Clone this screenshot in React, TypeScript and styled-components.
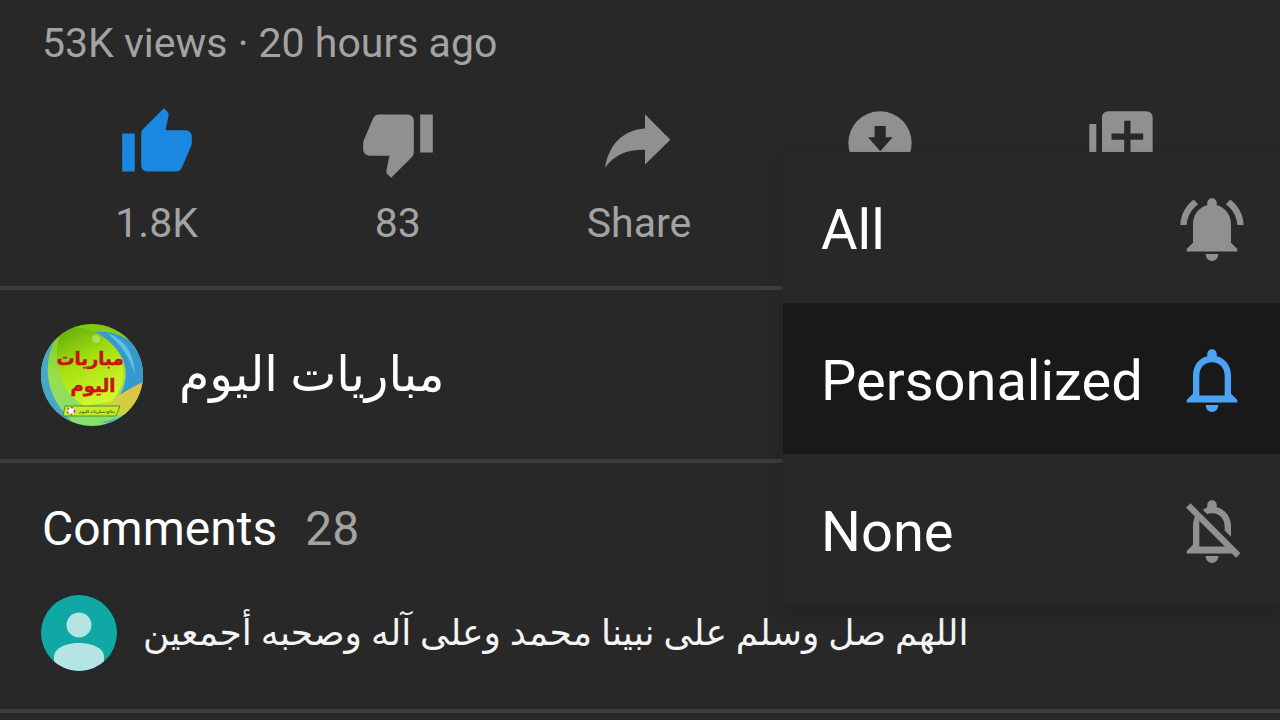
import React from "react";
import styled, { createGlobalStyle } from "styled-components";

const GlobalStyle = createGlobalStyle`
  *, *::before, *::after { box-sizing: border-box; }
  body {
    margin: 0;
    background: #282828;
    color: #fff;
    font-family: Roboto, "Noto Sans", "DejaVu Sans", sans-serif;
  }
  h2, p { margin: 0; padding: 0; font-weight: 400; }
  button { font: inherit; color: inherit; background: none; border: 0; padding: 0; cursor: pointer; }
`;

const Page = styled.main`
  position: relative;
  overflow: hidden;
`;

const Section = styled.section`
  border-bottom: 4px solid #3d3d3d;
`;

const Meta = styled.p`
  padding: 16px 42px 0;
  font-size: 41px;
  line-height: 54px;
  color: #a3a3a3;
`;

const Actions = styled.div`
  display: flex;
  padding: 35px 38px 39px 36px;
`;

const Action = styled.button<{ $active?: boolean }>`
  flex: 1;
  display: flex;
  flex-direction: column;
  align-items: center;
  gap: 18px;
  color: ${(p) => (p.$active ? "#1a87e0" : "#909090")};
`;

const ActionLabel = styled.span`
  font-size: 41px;
  line-height: 48px;
  color: #a3a3a3;
`;

const Icon = styled.svg`
  display: block;
  flex: none;
  width: 76px;
  height: 76px;
  fill: currentColor;
`;

const Channel = styled.a`
  display: flex;
  align-items: center;
  gap: 36px;
  padding: 34px 41px 33px;
  color: inherit;
  text-decoration: none;
`;

const ChannelAvatar = styled.svg`
  display: block;
  flex: none;
  width: 102px;
  height: 102px;
`;

const ChannelName = styled.span`
  font-size: 49px;
  line-height: 60px;
`;

const CommentsHeader = styled.header`
  display: flex;
  gap: 28px;
  padding: 36px 42px 0;
  font-size: 48px;
  line-height: 60px;
`;

const CommentsTitle = styled.h2`
  font-size: 48px;
`;

const Count = styled.span`
  color: #a3a3a3;
`;

const Comment = styled.div`
  display: flex;
  align-items: center;
  gap: 26px;
  padding: 36px 41px 38px;
`;

const UserAvatar = styled.svg`
  display: block;
  flex: none;
  width: 76px;
  height: 76px;
`;

const CommentText = styled.p`
  font-size: 36px;
  line-height: 60px;
  color: #f4f4f4;
`;

const Menu = styled.div`
  position: absolute;
  top: 152px;
  right: 0;
  width: 497px;
  background: #282828;
  box-shadow: 0 8px 16px rgba(0, 0, 0, 0.16);
`;

const MenuItem = styled.button<{ $selected?: boolean }>`
  display: flex;
  align-items: center;
  justify-content: space-between;
  width: 100%;
  padding: 39px 30px 34px 38px;
  font-size: 56px;
  line-height: 78px;
  text-align: left;
  background: ${(p) => (p.$selected ? "#191919" : "transparent")};
`;

const MenuIcon = styled(Icon)<{ $selected?: boolean }>`
  color: ${(p) => (p.$selected ? "#4ba3f8" : "#909090")};
`;

const BELL =
  "M12 2c-.83 0-1.5.67-1.5 1.5v.7C7.6 4.9 6 7.4 6 10.3V16l-2 2v.8h16V18l-2-2v-5.7c0-2.9-1.6-5.4-4.5-6.1v-.7C13.5 2.67 12.83 2 12 2z";
const CLAPPER = "M10 19.6h4c0 1.3-.9 2.2-2 2.2s-2-.9-2-2.2z";

const menuItems = [
  {
    label: "All",
    paths: [
      BELL,
      CLAPPER,
      "M7.6 3.9L6.2 2.4C3.8 4.3 2.1 7.1 2 10.4h2c.2-2.7 1.6-5 3.6-6.5z",
      "M16.4 3.9l1.4-1.5c2.4 1.9 4.1 4.7 4.2 8h-2c-.2-2.7-1.6-5-3.6-6.5z",
    ],
  },
  {
    label: "Personalized",
    selected: true,
    paths: [BELL + "M8 16.6V10.4C8 7.8 9.6 6.1 12 6.1s4 1.7 4 4.3v6.2z", CLAPPER],
  },
  {
    label: "None",
    paths: [
      "M5.2 2.9L21 18.7l-1.4 1.4L3.8 4.3z",
      "M6.7 6.9L8 8.4v8.2h8.4l2.2 2.2H4V18l2-2v-5.7c0-1.3.2-2.5.7-3.4z",
      "M10.5 4.2v-.7C10.5 2.67 11.17 2 12 2s1.5.67 1.5 1.5v.7c2.9.7 4.5 3.2 4.5 6.1v3.2l-2-2v-1.1C16 7.8 14.4 6.1 12 6.1c-.6 0-1 .1-1.5.3L9.1 5z",
      CLAPPER,
    ],
  },
];

export default function App() {
  return (
    <>
      <GlobalStyle />
      <Page>
        <Section>
          <Meta>53K views · 20 hours ago</Meta>
          <Actions>
            <Action $active aria-pressed="true">
              <Icon viewBox="0 0 24 24" aria-hidden="true">
                <path d="M1 21h4V9H1v12zm22-11c0-1.1-.9-2-2-2h-6.31l.95-4.57.03-.32c0-.41-.17-.79-.44-1.06L14.17 1 7.59 7.59C7.22 7.95 7 8.45 7 9v10c0 1.1.9 2 2 2h9c.83 0 1.54-.5 1.84-1.22l3.02-7.05c.09-.23.14-.47.14-.73v-2z" />
              </Icon>
              <ActionLabel>1.8K</ActionLabel>
            </Action>
            <Action>
              <Icon viewBox="0 0 24 24" aria-hidden="true">
                <path d="M15 3H6c-.83 0-1.54.5-1.84 1.22l-3.02 7.05c-.09.23-.14.47-.14.73v2c0 1.1.9 2 2 2h6.31l-.95 4.57-.03.32c0 .41.17.79.44 1.06L9.83 23l6.59-6.59c.36-.36.58-.86.58-1.41V5c0-1.1-.9-2-2-2zm4 0v12h4V3h-4z" />
              </Icon>
              <ActionLabel>83</ActionLabel>
            </Action>
            <Action>
              <Icon viewBox="0 0 24 24" aria-hidden="true">
                <path d="M13.9 2.9L21.9 11l-8 7.8v-4.7C8.2 14 4.3 15.7 1.3 19.7 2.3 13.4 6.2 7.9 13.9 7.4z" />
              </Icon>
              <ActionLabel>Share</ActionLabel>
            </Action>
            <Action aria-label="Download">
              <Icon viewBox="0 0 24 24" aria-hidden="true">
                <path
                  fillRule="evenodd"
                  d="M12 2a10 10 0 1 0 0 20 10 10 0 0 0 0-20zM10.3 6.6h3.5v3.6H16l-3.9 4.4-3.9-4.4h2.1z"
                />
              </Icon>
            </Action>
            <Action aria-label="Save">
              <Icon viewBox="0 0 24 24" aria-hidden="true">
                <path
                  fillRule="evenodd"
                  d="M2 6h2.2v14H18v2H4c-1.1 0-2-.9-2-2zM8 2h12c1.1 0 2 .9 2 2v12c0 1.1-.9 2-2 2H8c-1.1 0-2-.9-2-2V4c0-1.1.9-2 2-2zM13 5v4H9v2h4v4h2v-4h4V9h-4V5z"
                />
              </Icon>
            </Action>
          </Actions>
        </Section>

        <Section>
          <Channel href="#channel">
            <ChannelAvatar viewBox="0 0 102 102" aria-hidden="true">
              <defs>
                <clipPath id="disc">
                  <circle cx="51" cy="51" r="51" />
                </clipPath>
                <linearGradient id="ring" x1="0" y1="0" x2="0" y2="1">
                  <stop offset="0" stopColor="#7fc90e" />
                  <stop offset="0.5" stopColor="#9ade4c" />
                  <stop offset="1" stopColor="#84e070" />
                </linearGradient>
                <linearGradient id="core" x1="0" y1="0" x2="0.4" y2="1">
                  <stop offset="0" stopColor="#5fa60c" />
                  <stop offset="0.5" stopColor="#a4e010" />
                  <stop offset="1" stopColor="#d2f52a" />
                </linearGradient>
                <linearGradient id="gold" x1="1" y1="0" x2="0" y2="1">
                  <stop offset="0" stopColor="#e6bc48" />
                  <stop offset="1" stopColor="#c4dc3a" />
                </linearGradient>
              </defs>
              <g clipPath="url(#disc)">
                <rect width="102" height="102" fill="url(#ring)" />
                <path d="M14 16C2 40 4 68 26 92l8 10H0V20z" fill="#45a8c8" />
                <path d="M52 8c20-2 36 4 50 22v36L76 76C94 50 84 22 52 8z" fill="#3598d0" />
                <path d="M66 9c18 6 27 20 28 42-5-18-14-30-28-42z" fill="#62c0dc" />
                <path d="M102 58C88 64 76 74 58 82l14 8 18 2 12-16z" fill="url(#gold)" />
                <path d="M99 76C90 88 80 95 60 98l20 4 22-12z" fill="#4fb3c4" />
                <path d="M20 8C10 32 18 68 44 82l26-4C92 56 84 22 54 8 42 2 28 2 20 8z" fill="url(#core)" />
                <circle cx="55" cy="15" r="4" fill="#c8f4a0" opacity="0.5" />
                <path d="M24 82h55l-4 10H22z" fill="#c6ea2c" stroke="#5a8a1c" strokeWidth="1" />
                <circle cx="30" cy="87" r="3.5" fill="#fff" stroke="#9a4a5a" strokeWidth="1.5" strokeDasharray="2 2" />
              </g>
              <text x="49" y="41" fontSize="18" fontWeight="700" fill="#c41414" stroke="#c41414" strokeWidth="0.5" textAnchor="middle">مباريات</text>
              <text x="52" y="68" fontSize="18" fontWeight="700" fill="#c41414" stroke="#c41414" strokeWidth="0.5" textAnchor="middle">اليوم</text>
              <text x="56" y="89" fontSize="4" fontWeight="700" fill="#3f6412" textAnchor="middle">نتائج مباريات اليوم</text>
            </ChannelAvatar>
            <ChannelName dir="rtl" lang="ar">مباريات اليوم</ChannelName>
          </Channel>
        </Section>

        <Section>
          <CommentsHeader>
            <CommentsTitle>Comments</CommentsTitle>
            <Count>28</Count>
          </CommentsHeader>
          <Comment>
            <UserAvatar viewBox="0 0 76 76" aria-hidden="true">
              <defs>
                <clipPath id="user">
                  <circle cx="38" cy="38" r="38" />
                </clipPath>
              </defs>
              <g clipPath="url(#user)">
                <rect width="76" height="76" fill="#10a8a4" />
                <circle cx="38" cy="30" r="12.5" fill="#b5e5e3" />
                <path d="M13 62c0-9 12-14 25-14s25 5 25 14v14H13z" fill="#b5e5e3" />
              </g>
            </UserAvatar>
            <CommentText dir="rtl" lang="ar">اللهم صل وسلم على نبينا محمد وعلى آله وصحبه أجمعين</CommentText>
          </Comment>
        </Section>

        <Menu role="menu">
          {menuItems.map((item) => (
            <MenuItem key={item.label} role="menuitemradio" aria-checked={!!item.selected} $selected={item.selected}>
              {item.label}
              <MenuIcon viewBox="0 0 24 24" aria-hidden="true" $selected={item.selected}>
                {item.paths.map((d) => (
                  <path key={d} d={d} fillRule="evenodd" />
                ))}
              </MenuIcon>
            </MenuItem>
          ))}
        </Menu>
      </Page>
    </>
  );
}
